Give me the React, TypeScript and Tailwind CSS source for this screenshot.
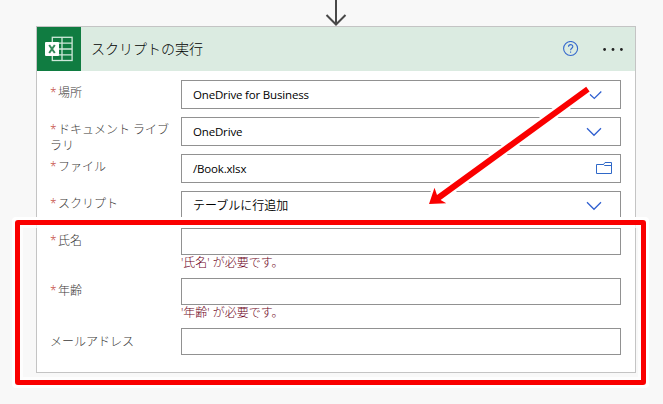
import React from "react";

function Chevron({ small = false }: { small?: boolean }) {
  return (
    <svg className="h-[10px] w-[18px] shrink-0" viewBox="0 0 18 10" fill="none" stroke="#2f5fd0" strokeWidth="1.25">
      {small ? <path d="M4.8 4.2 L9.3 8.4 L16.3 1.5" /> : <path d="M2 1.3 L9 8.3 L16 1.3" />}
    </svg>
  );
}

function Folder() {
  return (
    <svg className="h-[13px] w-[18px] shrink-0" viewBox="0 0 18 13" fill="none" stroke="#2f68c8" strokeWidth="1">
      <path d="M1.5 2.5 H8.5 L10 .5 H16.5 V11.5 H1.5 Z M8.5 2.5 L9.5 3.5 H16.5" />
    </svg>
  );
}

function ExcelLogo() {
  return (
    <svg className="h-11 w-11" viewBox="0 0 44 44">
      <rect width="44" height="44" fill="#107c41" />
      <g fill="none" stroke="#cfe8da" strokeWidth="1.3">
        <rect x="15.3" y="10.3" width="19.8" height="23.2" />
        <path d="M25 10.3 V33.5 M15.3 16.2 H35 M15.3 22 H35 M15.3 27.8 H35" />
      </g>
      <rect x="8" y="15" width="14" height="14" rx="1" fill="#fff" />
      <path d="M12.2 18 L17.8 26 M17.8 18 L12.2 26" stroke="#35895a" strokeWidth="2" />
    </svg>
  );
}

function Row({ label, required = true, value, latin = false, icon, height, error }: {
  label: string; required?: boolean; value?: string; latin?: boolean; icon?: React.ReactNode; height: string; error?: string;
}) {
  return (
    <div className={`flex items-start ${height}`}>
      <div className={`w-[131px] shrink-0 pr-1 text-[12px] leading-[16px] text-[#3c3a38] ${required ? "mt-[5px]" : "mt-[6px]"}`}>
        {required && <span className="mr-[3px] inline-block w-[5px] text-[#c23a30]">*</span>}
        {label}
      </div>
      <div className="w-[440px]">
        <div className={`flex items-center justify-between border border-[#919191] bg-white pl-[11px] text-black ${value ? "h-[29px]" : "h-[27px]"}`}>
          <span className={latin ? "pt-px text-[11.5px] font-normal tracking-[-0.17px]" : "pt-px text-[12px] font-[350]"}>{value}</span>
          {icon}
        </div>
        {error && <div className="text-[12px] leading-[16px] text-[#6c0018]">{error}</div>}
      </div>
    </div>
  );
}

export default function App() {
  return (
    <div className="relative h-[404px] w-[663px] overflow-hidden bg-[#f8f8f8] font-['Open_Sans','Noto_Sans_CJK_JP',sans-serif] font-light">
      <div className="flex h-[26px] justify-center pl-[9px]">
        <svg className="h-[26px] w-6" viewBox="0 0 24 26" fill="none" stroke="#484848" strokeWidth="2">
          <path d="M12 0 V25 M2.5 15 L12 24.5 L21.5 15" />
        </svg>
      </div>
      <div className="ml-9 h-[347px] w-[600px] border border-[#c4c4c4] bg-white">
        <div className="flex h-11 items-center bg-[#dbebe1]">
          <ExcelLogo />
          <h1 className="ml-[10px] flex-1 text-[14px] font-light leading-5 text-black">スクリプトの実行</h1>
          <svg className="h-4 w-4" viewBox="0 0 16 16" fill="none" stroke="#3568cd" strokeWidth="1.1">
            <circle cx="7.6" cy="7.5" r="7" />
            <path d="M5.5 5.8 C5.5 2.8 9.9 3 9.8 5.6 C9.7 7.2 7.6 7.3 7.6 9.2 M7.6 10.4 V11.8" />
          </svg>
          <svg className="ml-[23px] mr-[11px] h-4 w-[22px]" viewBox="0 0 22 16" fill="#222">
            <circle cx="2.6" cy="8.5" r="1.4" /><circle cx="11" cy="8.5" r="1.4" /><circle cx="19.4" cy="8.5" r="1.4" />
          </svg>
        </div>
        <div className="pl-[13px] pt-[9px]">
          <Row label="場所" value="OneDrive for Business" latin height="h-[37px]" icon={<span className="mr-[17px] flex"><Chevron small /></span>} />
          <Row label="ドキュメント ライブラリ" value="OneDrive" latin height="h-[37px]" icon={<span className="mr-[17px] flex"><Chevron /></span>} />
          <Row label="ファイル" value="/Book.xlsx" latin height="h-[37px]" icon={<span className="mr-[7px] flex"><Folder /></span>} />
          <Row label="スクリプト" value="テーブルに行追加" height="h-[37px]" icon={<span className="mr-[17px] flex"><Chevron /></span>} />
          <Row label="氏名" height="h-[50px]" error="'氏名' が必要です。" />
          <Row label="年齢" height="h-[50px]" error="'年齢' が必要です。" />
          <Row label="メールアドレス" required={false} height="h-[27px]" />
        </div>
      </div>
      <div className="absolute left-[12px] top-[217px] h-[171px] w-[637px] rounded-[4px] border-[3px] border-white">
        <div className="h-full rounded-[3px] border-[5px] border-[#fa0000]">
          <div className="h-full border-[3px] border-white/70" />
        </div>
      </div>
      <svg className="absolute left-0 top-0 h-[404px] w-[663px]" viewBox="0 0 663 404">
        <path d="M586.2 86.8 L589.6 91.6 L440.6 199.9 L446.3 203.3 L429 204 L434.5 187.7 L437 194.9 Z" fill="#fa0000" stroke="#fff" strokeWidth="5" strokeLinejoin="round" paintOrder="stroke" />
      </svg>
    </div>
  );
}
